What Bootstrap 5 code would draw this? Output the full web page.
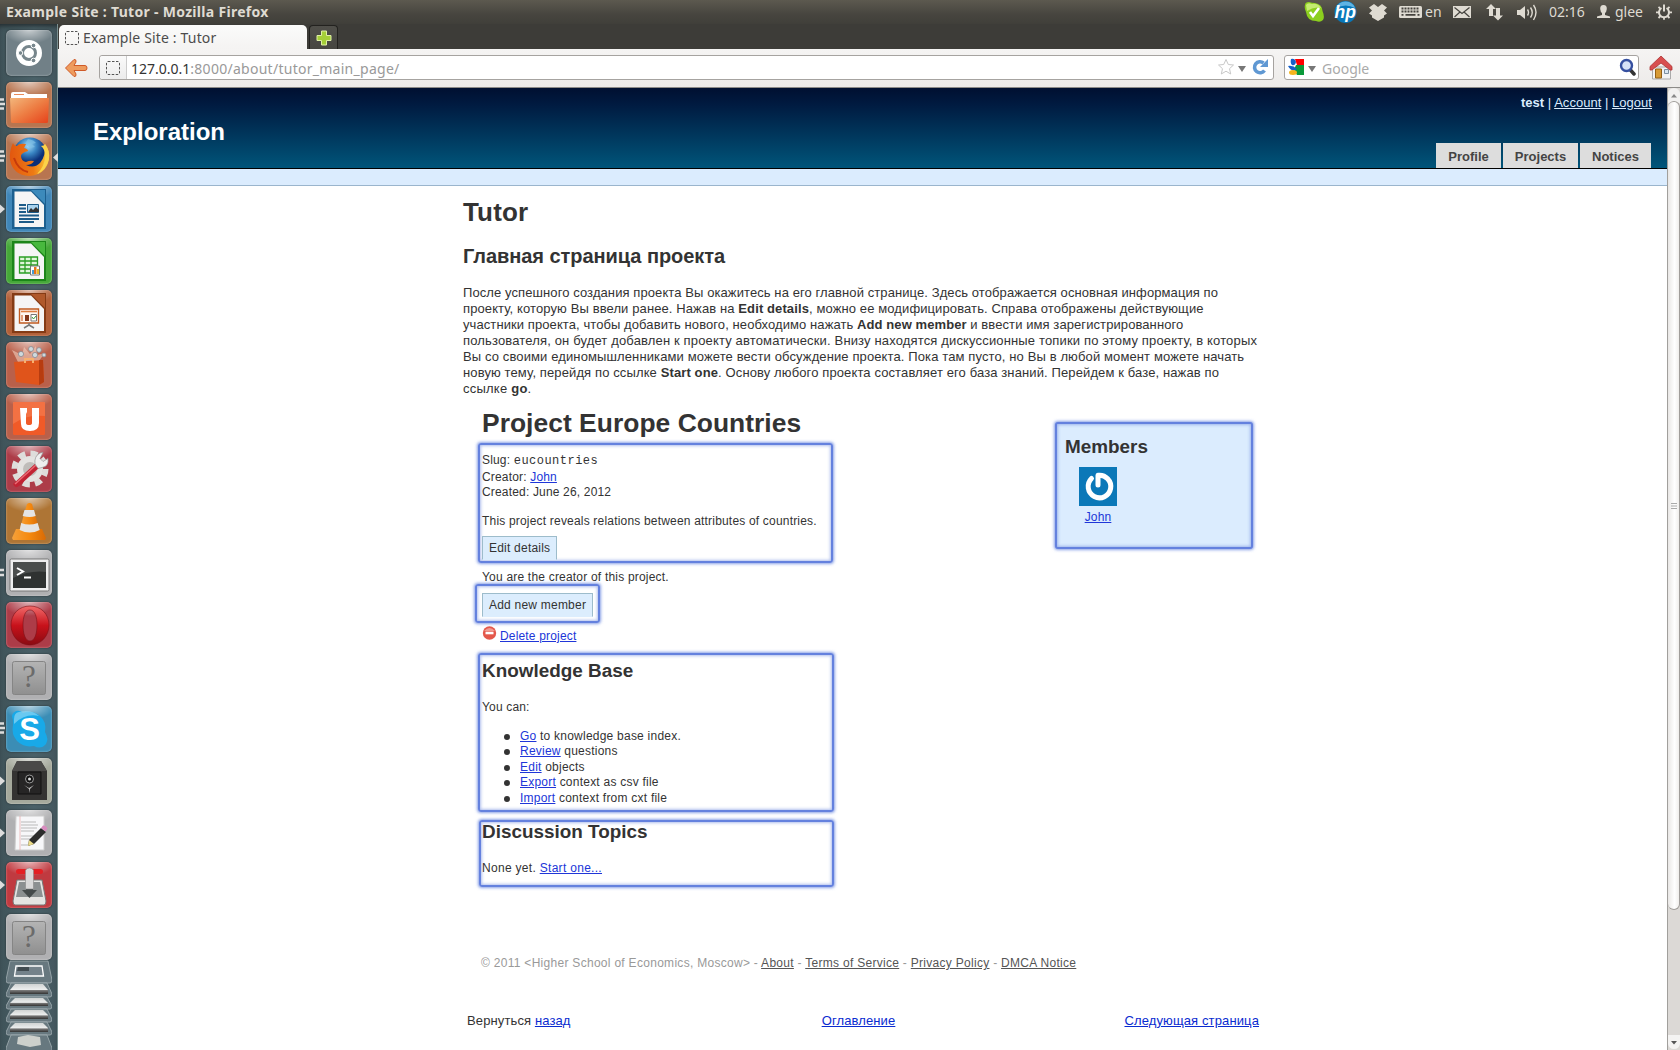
<!DOCTYPE html>
<html lang="ru">
<head>
<meta charset="utf-8">
<title>Example Site : Tutor</title>
<link href="https://cdn.jsdelivr.net/npm/bootstrap@5.3.0/dist/css/bootstrap.min.css" rel="stylesheet">
<script src="https://cdn.jsdelivr.net/npm/bootstrap@5.3.0/dist/js/bootstrap.bundle.min.js"></script>
<style>
body{width:1680px;height:1050px;overflow:hidden;font-family:"Liberation Sans",Arial,sans-serif;font-size:13px;line-height:16px;color:#333;background:#fff}
svg{display:block;flex:none}
h1,h2,p,ul{margin:0}
a{color:#0a2bd0}
/* desktop chrome */
.chrome-font{font-family:"Noto Sans","Open Sans",sans-serif;font-size:14px}
.top-panel{height:24px;flex:none;background:linear-gradient(#5c594f,#47453f 60%,#403f3a);color:#dfdbd2;padding:0 8px 0 6px}
.win-title{font-size:14px;font-weight:700;letter-spacing:.3px;line-height:24px}
.tray-txt{line-height:24px}
.g3{margin-left:3px}.g5{margin-left:5px}.g10{margin-left:10px}.g11{margin-left:11px}.g12{margin-left:12px}.g13{margin-left:13px}.g14{margin-left:14px}.g15{margin-left:15px}
.w-lang{width:16px}.w-clock{width:37px}.w-user{width:28px}
.launcher{width:58px;flex:none;background:linear-gradient(90deg,#3f5359,#4a6168 60%,#44575e);border-right:1px solid #7b9091;padding:6px 5px 0 6px;gap:6px;box-shadow:inset 0 5px 5px -3px #222b2e}
.tile{width:46px;height:46px;flex:none;border-radius:5px;position:relative;box-shadow:0 0 2px rgba(0,0,0,.5),inset 0 0 2px rgba(255,255,255,.5);background-image:radial-gradient(ellipse 26px 14px at 50% 0,rgba(255,255,255,.6),transparent)}
.t-gray{background-color:#718087}.t-brown{background-color:#b87550}.t-blue{background-color:#3f86b8}.t-green{background-color:#45a838}
.t-rust{background-color:#b26038}.t-salmon{background-color:#b9604a}.t-red{background-color:#ad3c48}.t-ochre{background-color:#ae7535}
.t-silver{background-color:#b0b0b2}.t-sky{background-color:#3b8db5}.t-olive{background-color:#a5a99c}.t-crimson{background-color:#c03a40}
.runs{position:absolute;left:-6px;top:16px;width:5px;height:14px}
.active-mark{position:absolute;right:-6px;top:19px;width:5px;height:9px}
.folded{margin:-7px 0 0}
/* browser */
.tabstrip{height:25px;flex:none;background:#3d3c38;padding:1px 0 0 1px;gap:2px}
.btab{width:248px;height:25px;border-radius:5px 5px 0 0;background:linear-gradient(#fbfbfa,#f4f3f2);padding:0 0 0 6px;gap:4px;color:#4c4c4c;letter-spacing:.16px;line-height:22px}
.newtab{width:29px;height:24px;border:1px solid #23221f;border-bottom:0;border-radius:4px 4px 0 0;background:linear-gradient(#504f4a,#464540)}
.toolbar-row{height:39px;flex:none;background:linear-gradient(#f5f4f3,#edebe9);border-bottom:1px solid #8d8b88;padding:6px 7px 0}
.field{height:25px;border:1px solid #a6a3a0;border-radius:3px;background:#fff;line-height:25px}
.url-field{width:1175px;margin-left:11px}
.url-text{padding-left:4px}
.ident{width:27px;height:23px;background:linear-gradient(#fafafa,#ececec);border-right:1px solid #ccc;border-radius:3px 0 0 3px}
.url-host{color:#333}.url-rest{color:#999;letter-spacing:.27px}
.search-field{width:355px;margin-left:10px;padding:0 2px 0 3px}
.search-hint{padding-left:6px;color:#aaa}
.vbar{width:13px;flex:none;background:#dcd9d6;border-left:1px solid #a19f9c}
.vcap{height:15px;flex:none;background:#f2f1f0;border-radius:6px 6px 0 0}
.vthumb{height:809px;flex:none;background:linear-gradient(90deg,#e9e7e5,#fff 60%,#f0eeec);border:1px solid #a09d9a;border-left:0;border-radius:7px;margin-top:-2px}
/* site */
.site-head{height:81px;flex:none;background:linear-gradient(#001031,#001a40 20%,#00557a);border-bottom:1px solid #000;padding-left:35px;padding-right:16px}
.brand-name{font-size:24px;font-weight:700;color:#fff;line-height:28px;padding-top:30px}
.user-line{color:#dbecfe;padding-top:7px;margin-right:-1px;letter-spacing:.03px}
.user-line a{color:#dbecfe}
.site-tabs{gap:2px}
.site-tabs div{height:25px;background:#ddd;color:#444;font-weight:700;line-height:27px;text-align:center}
.tab-a{width:65px}.tab-b{width:75px}.tab-c{width:71px}
.subbar{height:17px;flex:none;background:#dbecfe;border-bottom:1px solid #9ab5cd}
.content{margin-left:405px;width:797px}
.h-main{font-size:26px;line-height:30px;font-weight:700;padding-top:11px;letter-spacing:.15px}
.h-sub{font-size:20px;line-height:24px;font-weight:700;padding-top:17px;letter-spacing:-.05px}
.intro{padding-top:17px;white-space:nowrap}
.intro span{display:block;height:16px}
.l1{letter-spacing:.09px}.l2{letter-spacing:.108px}.l3{letter-spacing:.085px}.l4{letter-spacing:.152px}.l5{letter-spacing:.117px}.l7{letter-spacing:.23px}
.figure-area{padding:11px 0 0 15px;font-size:12px;letter-spacing:.17px;white-space:nowrap}
.figure-area a{color:#2036d8}
.f-title{font-size:26.4px;line-height:32px;font-weight:700;padding-left:4px;letter-spacing:.04px;margin-top:-1px}
.f-h{font-size:18.9px;line-height:24px;font-weight:700;letter-spacing:0}
.glow{border:2px solid #6481de;border-radius:3px;box-shadow:0 0 3px 1px rgba(98,128,222,.75),inset 0 0 3px 1px rgba(98,128,222,.5)}
.col-left{width:356px}
.box-a{width:355px;height:120px;margin-top:4px;padding:8px 0 0 2px;line-height:15.5px}
.slug{font-family:"Liberation Mono",monospace;letter-spacing:.48px}
.descr{margin:13.5px 0 6px;letter-spacing:.19px}
.fbtn{background:#dcedfd;border:1px solid #9dbccb;border-bottom-color:#dcedfd;padding:0 6px;line-height:22px;letter-spacing:.22px}
.owner-note{padding:6px 0 0 4px;letter-spacing:.2px}
.box-b{width:125px;height:39px;margin:-1px 0 0 -3px;padding:7px 0 0 5px}
.del-row{padding:5px 0 0 4px}
.del-row svg{margin-top:-2px;margin-right:1px}
.box-c{width:356px;height:159px;margin:9px 0 0;padding:4px 0 0 2px}
.can-line{margin-top:16px}
.box-c ul{line-height:15.45px;padding:0 0 0 22px;margin-top:14px;letter-spacing:.23px;list-style:none}
.box-c li{display:flex;gap:10px;align-items:center}
.box-c li::before{content:"";width:6px;height:6px;border-radius:3px;background:#333;margin-left:0}
.box-d{width:355px;height:67px;margin:8px 0 0 1px;padding-left:1px}
.box-d .f-h{line-height:20px}
.none-line{margin-top:18px;letter-spacing:.3px}
.members{width:198px;height:127px;margin:14px 0 0 221px;background:#dbecfe;padding:11px 0 0 8px}
.member-card{margin:8px 0 0 14px}
.member-card a{margin-top:3px}
.site-foot{margin-top:68px;padding-left:3px;color:#999;letter-spacing:.29px}
.site-foot a{color:#555}
.pager{margin-top:42px;padding:0 1px 0 4px;letter-spacing:.12px}
.pager a{color:#0a2bd0}
.toc-link{margin-left:22px}
</style>
</head>
<body class="d-flex flex-column">

<header class="top-panel chrome-font d-flex justify-content-between">
  <div class="win-title">Example Site : Tutor - Mozilla Firefox</div>
  <div class="tray d-flex">
    <svg width="20" height="24" viewBox="0 0 20 24"><path d="M1 5Q1 2 5 2Q8 3 11 3Q18 4 18.500 11Q21 17 19 20Q16 23 12 21Q3 21 2 12Q0 8 1 5Z" fill="#8ccf1e"/><path d="M2 5Q4 2 8 4Q14 3 17 8Q10 6 3 11Z" fill="#c5ec71"/><path d="M6 12l3 4 6-8" fill="none" stroke="#fff" stroke-width="2.600"/></svg>
    <svg class="g10" width="24" height="24" viewBox="0 0 24 24"><circle cx="11.500" cy="12" r="11" fill="#0878ba"/><path d="M2 8Q5 1 12 1.500Q19 2 21 8Q12 3 2 8Z" fill="#5fb4e4"/><text x="11.300" y="17.500" text-anchor="middle" font-family="Liberation Sans" font-size="17.500" font-weight="bold" font-style="italic" fill="#fff">hp</text></svg>
    <svg class="g11" width="18" height="24" viewBox="0 0 18 24" fill="#dfdbd2"><path d="M5 4l4 3 4-3 5 3.500-3 3 3 3-3 2v2l-6 3.500-6-3.500v-2l-3-2 3-3-3-3z"/></svg>
    <svg class="g12" width="23" height="24" viewBox="0 0 23 24"><rect y="6" width="23" height="12" rx="1.500" fill="#dfdbd2"/><path d="M2.500 8.500h18M2.500 11.500h18" stroke="#45433e" stroke-width="2" stroke-dasharray="2 1"/><path d="M2.500 14.800h2m2 0h10m2 0h2" stroke="#45433e" stroke-width="1.700"/></svg>
    <span class="tray-txt g3 w-lang">en</span>
    <svg class="g12" width="18" height="24" viewBox="0 0 18 24"><rect y="6" width="18" height="12" fill="#dfdbd2"/><path d="M1.500 7.500l7.500 6 7.500-6M1.500 17l5.500-5M16.500 17l-5.500-5" fill="none" stroke="#45433e" stroke-width="1.200"/></svg>
    <svg class="g15" width="17" height="24" viewBox="0 0 17 24" fill="#dfdbd2"><path d="M5 4l5 5H7v7H3V9H0zM12 20.500l-5-5h3V8h4v7.500h3z"/></svg>
    <svg class="g14" width="20" height="24" viewBox="0 0 20 24"><path d="M0 10h3l5-4v13l-5-4H0z" fill="#dfdbd2"/><path d="M10.500 9.500q2 3 0 6M13.500 7.500q3.500 5 0 10M16.500 5q5 7 0 15" fill="none" stroke="#dfdbd2" stroke-width="1.400"/></svg>
    <span class="tray-txt g12 w-clock">02:16</span>
    <svg class="g11" width="13" height="24" viewBox="0 0 13 24" fill="#dfdbd2"><path d="M6.500 5q3.500 0 3.300 4-.3 3-1.800 4v2l5 1.500v1.500H0v-1.500L5 15v-2q-1.500-1-1.800-4Q3 5 6.500 5z"/></svg>
    <span class="tray-txt g5 w-user">glee</span>
    <svg class="g13" width="16" height="24" viewBox="0 0 16 24" fill="none" stroke="#dfdbd2"><path d="M5.500 8a5 5 0 1 0 5 0" stroke-width="2"/><path d="M8 4.500v7" stroke-width="2"/><path d="M3 12.300H0M16 12.300h-3M4.500 16l-2 2M11.500 16l2 2M8 17.300v2.500M4.500 8.800l-2-2M11.500 8.800l2-2" stroke-width="1.800"/></svg>
  </div>
</header>

<div class="d-flex flex-grow-1">
  <aside class="launcher d-flex flex-column">
    <div class="tile t-gray"><svg width="46" height="46"><circle cx="23" cy="23" r="13" fill="#fff"/><circle cx="23" cy="23" r="6.500" fill="none" stroke="#77868c" stroke-width="3"/><g fill="#77868c" stroke="#fff"><circle cx="14.500" cy="23" r="2.300"/><circle cx="27.500" cy="15.500" r="2.300"/><circle cx="27.500" cy="30.500" r="2.300"/></g></svg></div>
    <div class="tile t-brown"><svg class="runs" viewBox="0 0 5 14"><path d="M0 1.500h4M0 6h5M0 10.500h4" stroke="#ddd" stroke-width="2.400"/></svg>
      <svg width="46" height="46"><defs><linearGradient id="fo" x2="1" y2="1"><stop stop-color="#f3b77c"/><stop offset=".5" stop-color="#ed7d43"/><stop offset="1" stop-color="#e6411a"/></linearGradient></defs><path d="M5 12q0-2 2-2h12l3 2h19v6H5z" fill="#fff"/><path d="M8 12.500h10" stroke="#e98b5a"/><path d="M4 16h39l-1 24q0 1-2 1H7q-2 0-2-1z" fill="url(#fo)"/></svg></div>
    <div class="tile t-brown"><svg class="runs" viewBox="0 0 5 14"><path d="M0 1.500h4M0 6h5M0 10.500h4" stroke="#ddd" stroke-width="2.400"/></svg><svg class="active-mark" viewBox="0 0 5 9"><path d="M5 0v9L0 4.500z" fill="#ddd"/></svg>
      <svg width="46" height="46"><defs><radialGradient id="gl" cx=".45" cy=".25"><stop stop-color="#a8dcf5"/><stop offset=".5" stop-color="#3a86c4"/><stop offset="1" stop-color="#0b2f78"/></radialGradient><linearGradient id="fx" x2="1"><stop stop-color="#e2570f"/><stop offset=".6" stop-color="#ee7a14"/><stop offset="1" stop-color="#fbd03a"/></linearGradient></defs><circle cx="24" cy="20" r="16.500" fill="url(#gl)"/><path d="M22 5q6 1 8 4l-4 1 3 3-5 1-5-4z" fill="#7fc0e6" opacity=".7"/><path d="M7 9Q3 17 4 26Q7 41 23 42Q40 41 43 25Q44 16 39 10Q40 22 34 29Q28 35 20 31Q26 31 28 27Q24 26 20 28Q15 27 15 22Q15 19 22 17Q22 15 18 14L20 10Q13 9 11 12Q8 12 7 9Z" fill="url(#fx)"/><path d="M39 10Q44 17 43 25Q40 37 31 40Q39 32 39 22Q39 15 35 12Q38 12 39 10Z" fill="#fbd34a"/><path d="M8 24q4 12 14 14" stroke="#c53b0c" stroke-width="2" fill="none"/></svg></div>
    <div class="tile t-blue"><svg class="runs" viewBox="0 0 5 14"><path d="M0 2.500L5 7 0 11.500z" fill="#ddd"/></svg>
      <svg width="46" height="46"><path d="M6 3h34v40H6z" fill="#1c5f8f"/><path d="M25 4h14v14z" fill="#3c8abb"/><path d="M8.500 5.500H25L38 19v22H8.500z" fill="#f5f5f5"/><path d="M13 19h7M13 22.500h7M13 26h7M13 29.500h20M13 33h20M13 36h15" stroke="#1d5b88" stroke-width="1.800"/><path d="M21.500 18.500h11v8h-11z" fill="#a9d3ee" stroke="#1d5b88"/><path d="M22 26l3-4 2 2 3-3 3 3v2z" fill="#333"/></svg></div>
    <div class="tile t-green"><svg width="46" height="46"><path d="M6 3h34v40H6z" fill="#1c8519"/><path d="M25 4h14v14z" fill="#48b83e"/><path d="M8.500 5.500H25L38 19v22H8.500z" fill="#f5f5f5"/><path d="M13.500 19h18v16h-18zM13.500 23h18M13.500 27h18M13.500 31h18M19 19v16M25 19v16" fill="#e1f5da" stroke="#2b9e25" stroke-width="1.300"/><path d="M24.500 28h9v9h-9z" fill="#fff" stroke="#777"/><path d="M26 32h2v4h-2z" fill="#469bd5"/><path d="M28 29h2.500v7H28z" fill="#e67518"/><path d="M31 31h2v5h-2z" fill="#ecb927"/></svg></div>
    <div class="tile t-rust"><svg width="46" height="46"><path d="M6 3h34v40H6z" fill="#843b15"/><path d="M25 4h14v14z" fill="#b0592b"/><path d="M8.500 5.500H25L38 19v22H8.500z" fill="#f5f5f5"/><path d="M13.500 19h19v14h-19z" fill="#fff6ef" stroke="#c05a20" stroke-width="1.400"/><path d="M15 21.500h16" stroke="#dd7d40" stroke-width="1.600"/><path d="M19 25h4v6h-4z" fill="#82361a"/><path d="M15 25h2v6h-2z" fill="#e5a17c"/><path d="M25 24.500h5.500V31H25z" fill="#fff" stroke="#777"/><path d="M26 27l1.500 2 2.500-3" fill="none" stroke="#38a038"/><path d="M23 33v2l-5 3m5-3l5 3" fill="none" stroke="#777" stroke-width="1.500"/></svg></div>
    <div class="tile t-salmon"><svg width="46" height="46"><path d="M12 20L6 8l10 5 2-8 6 7 6-8 1 9 8-2-7 9z" fill="#f8d8c8" opacity=".55"/><g fill="#cfdadd" stroke="#8a8a92" stroke-width=".8"><circle cx="15" cy="12" r="2.600"/><circle cx="25" cy="7" r="2.500"/><circle cx="33" cy="8" r="2.400"/><circle cx="29" cy="13" r="2.600"/><circle cx="38" cy="13" r="2"/></g><path d="M8 20l29-2 1 22-5 3-23-3z" fill="#e0541b"/><path d="M33 18l4 0 1 22-5 3z" fill="#b73c10"/><path d="M19 21v-4h8v4" fill="none" stroke="#f7b06f" stroke-width="2"/></svg></div>
    <div class="tile t-salmon"><svg width="46" height="46"><rect x="7" y="8" width="32" height="33" rx="1.500" fill="#f05a28"/><path d="M7 8h32v14Q20 20 7 30z" fill="#f58055" opacity=".6"/><path d="M14 14h7v4l-1 2v9q0 2 3 2t3-2V14h7v15q0 8-9 8t-9-7z" fill="#fff"/></svg></div>
    <div class="tile t-red"><svg width="46" height="46"><circle cx="24" cy="23" r="15.500" fill="none" stroke="#dedddb" stroke-width="6" stroke-dasharray="7 5.170"/><circle cx="24" cy="23" r="13" fill="#e4e3e1"/><circle cx="24" cy="23" r="7" fill="#bfbdba"/><path d="M7 38L30 17l4 4-21 19q-4 3-6-2z" fill="#c22334"/><path d="M9 38l21-19" stroke="#ea6b74" stroke-width="1.500"/><path d="M29 18q-1-8 5-11l3-.5-3 6 3 3 5-3q1 8-6 9l-4 1z" fill="#eee" stroke="#999" stroke-width=".7"/></svg></div>
    <div class="tile t-ochre"><svg width="46" height="46"><defs><linearGradient id="vl" x2="1"><stop stop-color="#f5a13a"/><stop offset=".5" stop-color="#f58a10"/><stop offset="1" stop-color="#d96a05"/></linearGradient></defs><path d="M10 31h26l4 9-1 2H7l-1-2z" fill="url(#vl)"/><path d="M21 6q2.500-2 5 0l7.500 26q-10 5-20 0z" fill="url(#vl)"/><path d="M18.500 12h9.500l1.700 6q-6 2-13 0zM15.200 25q8 3 16.500 0l2 7q-10 5-20 0z" fill="#e4e4e4"/></svg></div>
    <div class="tile t-silver"><svg class="runs" viewBox="0 0 5 14"><path d="M0 4h4M0 9h4" stroke="#ddd" stroke-width="2.400"/></svg>
      <svg width="46" height="46"><rect x="4" y="9" width="39" height="32" rx="1.500" fill="#eee" stroke="#777"/><rect x="7" y="12" width="33" height="26" fill="#2f3231"/><path d="M7 12h33v10Q24 20 7 28z" fill="#4b4e4d"/><path d="M11 18l6 3.500-6 3.500M18 27.500h7" fill="none" stroke="#fff" stroke-width="2"/></svg></div>
    <div class="tile t-red"><svg width="46" height="46"><defs><linearGradient id="op" y2="1" x2="0"><stop stop-color="#f26b6b"/><stop offset=".5" stop-color="#c8121b"/><stop offset="1" stop-color="#8b0a12"/></linearGradient></defs><path fill-rule="evenodd" d="M24 4c11 0 19 8 19 19s-8 20-19 20S5 34 5 23 13 4 24 4zm0 4c-5 0-7 7-7 15s2 16 7 16 7-8 7-16-2-15-7-15z" fill="url(#op)" stroke="#7e1118" stroke-width=".6"/></svg></div>
    <div class="tile t-silver"><svg width="46" height="46"><defs><linearGradient id="un" y2="1" x2="0"><stop stop-color="#b4b4b4"/><stop offset="1" stop-color="#8f8f8f"/></linearGradient></defs><rect x="6.500" y="7.500" width="33" height="33" rx="2" fill="url(#un)" stroke="#858585"/><text x="23" y="33" text-anchor="middle" font-family="Liberation Serif" font-size="31" fill="#6b6b6b">?</text></svg></div>
    <div class="tile t-sky"><svg class="runs" viewBox="0 0 5 14"><path d="M0 1.500h4M0 6h5M0 10.500h4" stroke="#ddd" stroke-width="2.400"/></svg>
      <svg width="46" height="46"><path d="M7 14q-3-6 3-9 4-1 7 2 10-3 17 3 7 6 5 16 4 7 1 12-5 6-12 2-10 2-17-5-6-7-4-16z" fill="#18a9e8"/><path d="M8 13q0-6 5-7 12-3 20 4-14-3-25 8z" fill="#8cd7f5" opacity=".7"/><text x="23.500" y="34" text-anchor="middle" font-family="Liberation Sans" font-size="31" font-weight="bold" fill="#fff">S</text></svg></div>
    <div class="tile t-olive"><svg class="runs" viewBox="0 0 5 14"><path d="M0 2.500L5 7 0 11.500z" fill="#ddd"/></svg>
      <svg width="46" height="46"><path d="M11 3h24l6 10v29H6V13z" fill="#343332"/><path d="M11 3h24l6 10H6z" fill="#4a4948"/><path d="M12 14h23v22H12z" fill="#262525" stroke="#111"/><circle cx="23.500" cy="21" r="4" fill="#111" stroke="#999"/><circle cx="23.500" cy="21" r="1.500" fill="#ddd"/><path d="M18 27l5 3 5-3-4 4v4l-1-4z" fill="#bbb"/></svg></div>
    <div class="tile t-silver"><svg class="runs" viewBox="0 0 5 14"><path d="M0 2.500L5 7 0 11.500z" fill="#ddd"/></svg>
      <svg width="46" height="46"><path d="M10 6h28v34H9z" fill="#f7f7f9" stroke="#ccc"/><path d="M14 6v34" stroke="#e8a7a7" stroke-width=".7"/><path d="M15 12h15M15 15h17M15 18h16M15 21h13M15 26h14M15 29h10M15 35h9" stroke="#aaa" stroke-width=".8"/><path d="M22 36l1-6 12-12 5 4-12 12z" fill="#2c2c2c"/><path d="M22 36l1-6 5 4z" fill="#ecdc8a"/><path d="M35 18l2-2.500q3-.5 4.500 3l-2 3z" fill="#d98cc0"/></svg></div>
    <div class="tile t-crimson"><svg class="runs" viewBox="0 0 5 14"><path d="M0 2.500L5 7 0 11.500z" fill="#ddd"/></svg>
      <svg width="46" height="46"><rect x="10" y="7" width="27" height="5" rx="2.500" fill="#e32024"/><path d="M11 18h25l4 21q0 4-2 4H9q-2 0-2-4z" fill="#e4e4e2" stroke="#777"/><path d="M13 20h21l3 15H10z" fill="#8b9091"/><path d="M20 20h7v8h4l-7.500 8-7.500-8h4z" fill="#444a4b"/><path d="M19.500 8q4-4 8 0v19h-8z" fill="#d9d9d9" stroke="#888" stroke-width=".6"/></svg></div>
    <div class="tile t-silver"><svg width="46" height="46"><rect x="6.500" y="7.500" width="33" height="33" rx="2" fill="url(#un)" stroke="#858585"/><text x="23" y="33" text-anchor="middle" font-family="Liberation Serif" font-size="31" fill="#6b6b6b">?</text></svg></div>
    <svg class="folded" width="46" height="91" viewBox="0 0 46 91"><defs><linearGradient id="dk" y2="1" x2="0"><stop stop-color="#d0d3d3"/><stop offset=".55" stop-color="#eceeee"/><stop offset=".65" stop-color="#777"/><stop offset="1" stop-color="#333"/></linearGradient></defs>
      <g stroke="#a4b1b5" stroke-width=".8" fill="#67787f"><path d="M4 2h38l4 19q0 3-2 3H2q-2 0-2-3z"/><path d="M5 24h36l5 11q0 3-2 3H2q-2 0-2-3z"/><path d="M5 38h36l5 9q0 3-2 3H2q-2 0-2-3z"/><path d="M5 50h36l5 10q0 3-2 3H2q-2 0-2-3z"/><path d="M5 63h36l5 10q0 3-2 3H2q-2 0-2-3z"/><path d="M5 76h36l5 13v4H0v-4z"/></g>
      <path d="M10 7h26l1.500 10h-29z" fill="#74828a" stroke="#fff" stroke-width="1.300"/><path d="M12 8h11v4H11z" fill="#424c51"/>
      <g fill="url(#dk)"><path d="M9 25h28l5 6v4H4v-4z"/><path d="M9 39h28l5 5v3H4v-3z"/><path d="M9 51h28l5 5v4H4v-4z"/><path d="M9 64h28l5 5v4H4v-4z"/></g><path d="M12 78l10-2 12 2 1 8-11 2-13-3z" fill="#cdd0cc"/></svg>
  </aside>

  <main class="flex-grow-1 d-flex flex-column">
    <div class="tabstrip chrome-font d-flex">
      <div class="btab d-flex align-items-center"><svg width="14" height="14"><rect x=".5" y=".5" width="13" height="13" rx="1.500" fill="none" stroke="#555" stroke-dasharray="2.500 1.500"/></svg><span>Example Site : Tutor</span></div>
      <div class="newtab d-flex justify-content-center align-items-center"><svg width="16" height="16"><path d="M5.500 1h5v4.500H15v5h-4.500V15h-5v-4.500H1v-5h4.500z" fill="#a5cf38" stroke="#dff0a5"/></svg></div>
    </div>
    <div class="toolbar-row chrome-font d-flex">
      <svg width="23" height="25" viewBox="0 0 23 25"><path d="M.5 13L9 4.500q2.500-.5 2 2.500l-2 3.500h11q2 0 2 2.500t-2 2.500H9l2 3.500q.5 3-2 2.500z" fill="#ee9b5d" stroke="#cf5a28"/></svg>
      <div class="field url-field d-flex">
        <div class="ident d-flex justify-content-center align-items-center"><svg width="14" height="14"><rect x=".5" y=".5" width="13" height="13" rx="1.500" fill="none" stroke="#555" stroke-dasharray="2.500 1.500"/></svg></div>
        <div class="flex-grow-1 url-text"><span class="url-host">127.0.0.1</span><span class="url-rest">:8000/about/tutor_main_page/</span></div>
        <svg width="55" height="23" viewBox="0 0 55 23"><path d="M8 3.500l2.300 5 5.200.5-4 3.700 1.200 5.300L8 15.200 3.300 18l1.200-5.300-4-3.700 5.200-.5z" fill="#fff" stroke="#c8c8c8"/><path d="M20 10h8l-4 6z" fill="#777"/><path d="M46.500 14.500A5.500 5.500 0 1 1 45.500 7" fill="none" stroke="#5f98d3" stroke-width="3.600"/><path d="M50 3v8h-8z" fill="#5f98d3"/></svg>
      </div>
      <div class="field search-field d-flex">
        <svg width="28" height="23" viewBox="0 0 28 23"><path d="M0 3h16v16H0z" fill="#fff"/><path d="M7 3h9v6H9z" fill="#f00"/><path d="M8 9h8v10H9q-4-5-1-10z" fill="#0a9a3a"/><path d="M3 3q4-1 5 3-1 4-4 3-2-2-1-6zM0 10q5-1 9 3l-3 2q-4-1-6-5z" fill="#1760c8"/><ellipse cx="5" cy="16.500" rx="4" ry="2.500" fill="#f5b51d"/><path d="M20 10h8l-4 6z" fill="#777"/></svg>
        <div class="flex-grow-1 search-hint">Google</div>
        <svg width="17" height="23" viewBox="0 0 17 23"><path d="M11 13.500l4 4.500" stroke="#333" stroke-width="3.500" stroke-linecap="round"/><circle cx="7.500" cy="9.500" r="5.500" fill="#d7e2f7" stroke="#3650a0" stroke-width="2.400"/></svg>
      </div>
      <svg class="g10" width="24" height="26" viewBox="0 0 24 26"><path d="M3.500 12h18v12h-18z" fill="#f3f3f3" stroke="#aaa"/><path d="M6.500 14h6v9h-6z" fill="#d79a35" stroke="#946014"/><path d="M15.500 14.500h4v4h-4z" fill="#d9e6f1" stroke="#7c8e9e"/><path d="M12 1l11 10.500v3.500h-2l-9-7-9 7H1v-3.500z" fill="#d84f4f" stroke="#ac3232" stroke-width=".8"/></svg>
    </div>

    <div class="d-flex flex-grow-1">
      <div class="flex-grow-1 d-flex flex-column">
        <div class="site-head d-flex justify-content-between">
          <div class="brand-name">Exploration</div>
          <div class="d-flex flex-column justify-content-between align-items-end">
            <div class="user-line"><b>test</b> | <a href="#">Account</a> | <a href="#">Logout</a></div>
            <div class="site-tabs d-flex"><div class="tab-a">Profile</div><div class="tab-b">Projects</div><div class="tab-c">Notices</div></div>
          </div>
        </div>
        <div class="subbar"></div>
        <div class="content">
          <h1 class="h-main">Tutor</h1>
          <h2 class="h-sub">Главная страница проекта</h2>
          <p class="intro"><span class="l1">После успешного создания проекта Вы окажитесь на его главной странице. Здесь отображается основная информация по</span><span class="l2">проекту, которую Вы ввели ранее. Нажав на <b>Edit details</b>, можно ее модифицировать. Справа отображены действующие</span><span class="l3">участники проекта, чтобы добавить нового, необходимо нажать <b>Add new member</b> и ввести имя зарегистрированного</span><span class="l4">пользователя, он будет добавлен к проекту автоматически. Внизу находятся дискуссионные топики по этому проекту, в которых</span><span class="l5">Вы со своими единомышленниками можете вести обсуждение проекта. Пока там пусто, но Вы в любой момент можете начать</span><span class="l5">новую тему, перейдя по ссылке <b>Start one</b>. Основу любого проекта составляет его база знаний. Перейдем к базе, нажав по</span><span class="l7">ссылке <b>go</b>.</span></p>

          <section class="figure-area">
            <div class="d-flex align-items-start">
              <div class="col-left">
                <h2 class="f-title">Project Europe Countries</h2>
                <div class="glow box-a">
                  <div>Slug: <span class="slug">eucountries</span></div>
                  <div>Creator: <a href="#">John</a></div>
                  <div>Created: June 26, 2012</div>
                  <div class="descr">This project reveals relations between attributes of countries.</div>
                  <span class="fbtn d-inline-block">Edit details</span>
                </div>
                <div class="owner-note">You are the creator of this project.</div>
                <div class="glow box-b"><span class="fbtn d-inline-block">Add new member</span></div>
                <div class="d-flex del-row"><svg width="17" height="16" viewBox="0 0 17 16"><circle cx="7.500" cy="7" r="6.700" fill="#e4584b"/><path d="M2 5q5.500-6 11 0z" fill="#f29b90"/><path d="M3.500 7h8" stroke="#fff" stroke-width="2.600"/></svg><a href="#">Delete project</a></div>
                <div class="glow box-c">
                  <h2 class="f-h">Knowledge Base</h2>
                  <div class="can-line">You can:</div>
                  <ul>
                    <li><span><a href="#">Go</a> to knowledge base index.</span></li>
                    <li><span><a href="#">Review</a> questions</span></li>
                    <li><span><a href="#">Edit</a> objects</span></li>
                    <li><span><a href="#">Export</a> context as csv file</span></li>
                    <li><span><a href="#">Import</a> context from cxt file</span></li>
                  </ul>
                </div>
                <div class="glow box-d">
                  <h2 class="f-h">Discussion Topics</h2>
                  <div class="none-line">None yet. <a href="#">Start one...</a></div>
                </div>
              </div>
              <div class="glow members">
                <h2 class="f-h">Members</h2>
                <div class="d-inline-flex flex-column align-items-center member-card">
                  <svg width="38" height="39"><path d="M0 0h38v39H0z" fill="#0b78b8"/><path d="M12.500 11.500A11.300 11.300 0 1 0 19 8.300V18" fill="none" stroke="#fff" stroke-width="5" stroke-linecap="round" stroke-linejoin="round"/></svg>
                  <a href="#">John</a>
                </div>
              </div>
            </div>
            <div class="site-foot">© 2011 &lt;Higher School of Economics, Moscow&gt; - <a href="#">About</a> - <a href="#">Terms of Service</a> - <a href="#">Privacy Policy</a> - <a href="#">DMCA Notice</a></div>
          </section>
          <nav class="pager d-flex justify-content-between"><span>Вернуться <a href="#">назад</a></span><a class="toc-link" href="#">Оглавление</a><a href="#">Следующая страница</a></nav>
        </div>
      </div>
      <div class="vbar d-flex flex-column">
        <svg class="vcap" width="12" height="15"><path d="M3 9.500h6L6 6z" fill="#888"/></svg>
        <div class="vthumb d-flex flex-column justify-content-center align-items-center"><svg width="6" height="8"><path d="M0 1.500h6M0 4h6M0 6.500h6" stroke="#aaa"/></svg></div>
        <svg class="mt-auto" width="12" height="15"><path d="M0 0h12v9q-1 5-6 5T0 9z" fill="#f4f3f2"/><path d="M3 6h6L6 9.500z" fill="#555"/></svg>
      </div>
    </div>
  </main>
</div>
</body>
</html>
